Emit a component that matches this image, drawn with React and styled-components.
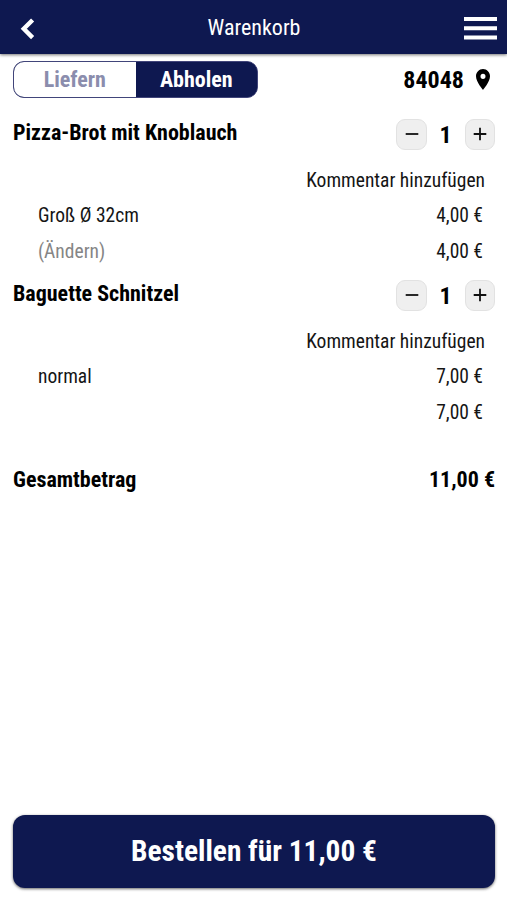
import React, { useState } from 'react';
import styled, { createGlobalStyle } from 'styled-components';

const GlobalStyle = createGlobalStyle`
    * {
        box-sizing: border-box;
    }
    body {
        margin: 0;
        background: #fff;
        color: #000;
        font-family: 'Roboto Condensed', Roboto, 'Liberation Sans', sans-serif;
        font-stretch: 75%;
    }
    button {
        font: inherit;
        border: none;
        padding: 0;
        cursor: pointer;
    }
`

const Page = styled.div`
    height: 900px;
    display: flex;
    flex-direction: column;
    overflow: hidden;
`

const Header = styled.header`
    flex: none;
    height: 54px;
    padding: 0 10px 0 20px;
    display: grid;
    grid-template-columns: 34px 1fr 33px;
    align-items: center;
    background: #0e1850;
    color: #fff;
    box-shadow: 0 1px 3px rgba(0, 0, 0, .55);
`

const Title = styled.h1`
    margin: 0;
    padding-right: 10px;
    text-align: center;
    font-size: 22px;
    font-weight: 400;
    line-height: 56px;
`

const IconButton = styled.button`
    height: 34px;
    display: flex;
    align-items: center;
    margin-top: 1px;
    color: inherit;
    background: none;
`

const Content = styled.main`
    flex: 1;
    padding: 7px 12px 0 13px;
`

const TopRow = styled.div`
    display: flex;
    justify-content: space-between;
    height: 46px;
`

const Toggle = styled.div`
    display: flex;
    width: 245px;
    height: 37px;
    border: 1px solid #41457a;
    border-radius: 11px;
    background: #0e1850;
    overflow: hidden;
`

const ToggleOption = styled.button`
    flex: 1;
    font-size: 22px;
    font-weight: 700;
    line-height: 35px;
    background: ${({ $active }) => ($active ? '#0e1850' : '#fff')};
    color: ${({ $active }) => ($active ? '#fff' : '#8b8dad')};
`

const Zip = styled.div`
    display: flex;
    align-items: center;
    gap: 12px;
    height: 37px;
    padding-right: 5px;
    font-size: 24px;
    font-weight: 700;
`

const ItemHead = styled.div`
    display: flex;
    justify-content: space-between;
    align-items: center;
    height: 54.5px;
`

const ItemName = styled.h2`
    margin: 0 0 4px;
    font-size: 22px;
    font-weight: 700;
`

const Stepper = styled.div`
    display: grid;
    grid-template-columns: 31px 38px 30px;
    text-align: center;
    align-items: center;
    font-size: 24px;
    font-weight: 700;
`

const Count = styled.span`
    padding: 2px 1px 0 0;
`

const StepButton = styled.button`
    height: 31px;
    display: flex;
    align-items: center;
    justify-content: center;
    border: 1px solid #e2e2e2;
    border-radius: 9px;
    background: #efefef;
    color: #111;
`

const Line = styled.div`
    display: flex;
    justify-content: space-between;
    height: 35.5px;
    padding: 0 12px 0 25px;
    font-size: 19.5px;
    line-height: 37px;
    color: #151515;
`

const Comment = styled(Line)`
    justify-content: flex-end;
    padding-right: 10px;
`

const Muted = styled.span`
    color: #858585;
`

const Total = styled.div`
    display: flex;
    justify-content: space-between;
    margin-top: 36px;
    font-size: 22px;
    font-weight: 700;
    line-height: 30px;
`

const OrderButton = styled.button`
    flex: none;
    height: 73px;
    margin: 0 12px 12.5px 13px;
    padding-bottom: 1px;
    border-radius: 12px;
    background: #0e1850;
    color: #fff;
    font-size: 29.4px;
    font-weight: 700;
    box-shadow: 0 1px 3px rgba(0, 0, 0, .6);
`

const modes = ['Liefern', 'Abholen']

const initialItems = [
    {
        name: 'Pizza-Brot mit Knoblauch',
        variant: 'Groß Ø 32cm',
        price: 4,
        count: 1,
        editable: true
    },
    {
        name: 'Baguette Schnitzel',
        variant: 'normal',
        price: 7,
        count: 1,
        editable: false
    },
]

const euro = (value) => `${value.toFixed(2).replace('.', ',')} €`

const BackIcon = () => (
    <svg width="15" height="22" viewBox="0 0 15 22" fill="none" stroke="currentColor" strokeWidth="4.4">
        <path d="M12.6 2 3.8 10.8l8.8 8.8" />
    </svg>
)

const MenuIcon = () => (
    <svg width="33" height="23" viewBox="0 0 33 23" fill="currentColor">
        <path d="M0 0h33v4H0zM0 9.3h33v4H0zM0 18.6h33v4H0z" />
    </svg>
)

const PinIcon = () => (
    <svg width="14" height="21" viewBox="5 2 14 20" preserveAspectRatio="none" fill="currentColor">
        <path d="M12 2C8.13 2 5 5.13 5 9c0 5.25 7 13 7 13s7-7.75 7-13c0-3.87-3.13-7-7-7zm0 9.5a2.5 2.5 0 0 1 0-5 2.5 2.5 0 0 1 0 5z" />
    </svg>
)

const StepIcon = ({ plus }) => (
    <svg width="14" height="14" viewBox="0 0 14 14" stroke="currentColor" strokeWidth="1.8">
        <path d={plus ? 'M.7 7h12.6M7 .7v12.6' : 'M.7 7h12.6'} />
    </svg>
)

const CartItem = ({ item, onChange }) => (
    <section>
        <ItemHead>
            <ItemName>{item.name}</ItemName>
            <Stepper>
                <StepButton aria-label="Weniger" onClick={() => onChange(-1)}><StepIcon /></StepButton>
                <Count>{item.count}</Count>
                <StepButton aria-label="Mehr" onClick={() => onChange(1)}><StepIcon plus /></StepButton>
            </Stepper>
        </ItemHead>
        <Comment>Kommentar hinzufügen</Comment>
        <Line>
            <span>{item.variant}</span>
            <span>{euro(item.price)}</span>
        </Line>
        <Line>
            <Muted>{item.editable && '(Ändern)'}</Muted>
            <span>{euro(item.price * item.count)}</span>
        </Line>
    </section>
)

const App = () => {
    const [mode, setMode] = useState('Abholen')
    const [items, setItems] = useState(initialItems)

    const total = items.reduce((sum, item) => sum + item.price * item.count, 0)

    const changeCount = (index, step) => {
        setItems(items.map((item, i) => (
            i === index ? { ...item, count: Math.max(1, item.count + step) } : item
        )))
    }

    return (
        <Page>
            <GlobalStyle />
            <Header>
                <IconButton aria-label="Zurück"><BackIcon /></IconButton>
                <Title>Warenkorb</Title>
                <IconButton aria-label="Menü"><MenuIcon /></IconButton>
            </Header>

            <Content>
                <TopRow>
                    <Toggle>
                        {modes.map((name) => (
                            <ToggleOption key={name} $active={mode === name} onClick={() => setMode(name)}>
                                {name}
                            </ToggleOption>
                        ))}
                    </Toggle>
                    <Zip>84048 <PinIcon /></Zip>
                </TopRow>

                {items.map((item, index) => (
                    <CartItem key={item.name} item={item} onChange={(step) => changeCount(index, step)} />
                ))}

                <Total>
                    <span>Gesamtbetrag</span>
                    <span>{euro(total)}</span>
                </Total>
            </Content>

            <OrderButton>Bestellen für {euro(total)}</OrderButton>
        </Page>
    );
}

export default App;
